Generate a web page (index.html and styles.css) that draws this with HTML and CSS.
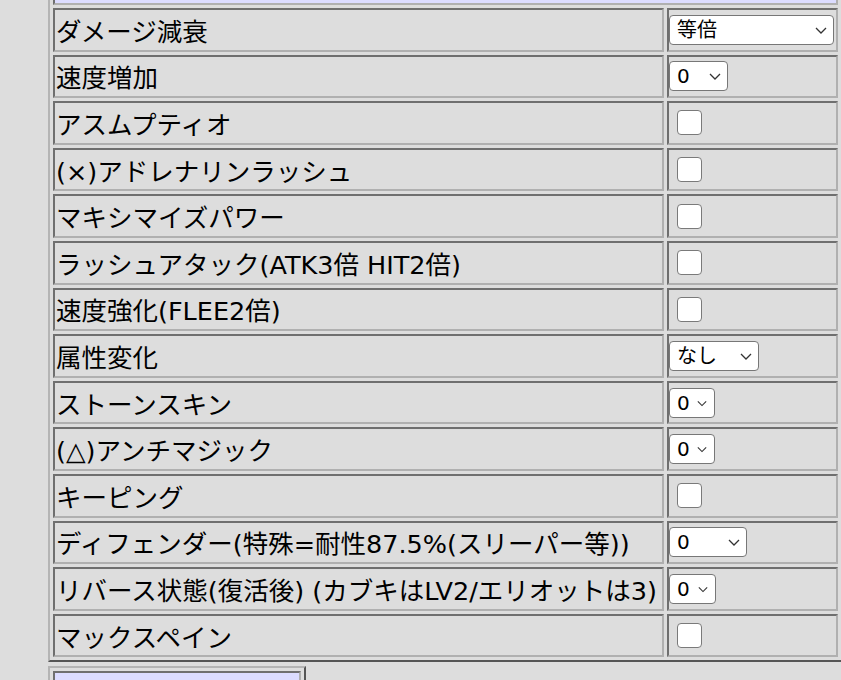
FILE: index.html
```html
<!DOCTYPE html>
<html lang="ja">
<head>
<meta charset="utf-8">
<title>設定</title>
<link rel="stylesheet" href="styles.css">
</head>
<body>
<div class="page">
  <table class="grid">
    <colgroup><col class="c-label"><col class="c-value"></colgroup>
    <tr><td class="head" colspan="2"></td></tr>
    <tr><td class="label">ダメージ減衰</td><td class="value"><span class="sel w165"><select><option>等倍</option></select><svg class="chev" viewBox="0 0 12 7"><path d="M1 1l5 5 5-5"/></svg></span></td></tr>
    <tr><td class="label">速度増加</td><td class="value"><span class="sel w59"><select><option>0</option></select><svg class="chev" viewBox="0 0 12 7"><path d="M1 1l5 5 5-5"/></svg></span></td></tr>
    <tr><td class="label">アスムプティオ</td><td class="value"><input type="checkbox" class="chk"></td></tr>
    <tr><td class="label">(×)アドレナリンラッシュ</td><td class="value"><input type="checkbox" class="chk"></td></tr>
    <tr><td class="label">マキシマイズパワー</td><td class="value"><input type="checkbox" class="chk"></td></tr>
    <tr><td class="label">ラッシュアタック(ATK3倍 HIT2倍)</td><td class="value"><input type="checkbox" class="chk"></td></tr>
    <tr><td class="label">速度強化(FLEE2倍)</td><td class="value"><input type="checkbox" class="chk"></td></tr>
    <tr><td class="label">属性変化</td><td class="value"><span class="sel w90"><select><option>なし</option></select><svg class="chev" viewBox="0 0 12 7"><path d="M1 1l5 5 5-5"/></svg></span></td></tr>
    <tr><td class="label">ストーンスキン</td><td class="value"><span class="sel w46"><select><option>0</option></select><svg class="chev" viewBox="0 0 12 7"><path d="M1 1l5 5 5-5"/></svg></span></td></tr>
    <tr><td class="label">(△)アンチマジック</td><td class="value"><span class="sel w46"><select><option>0</option></select><svg class="chev" viewBox="0 0 12 7"><path d="M1 1l5 5 5-5"/></svg></span></td></tr>
    <tr><td class="label">キーピング</td><td class="value"><input type="checkbox" class="chk"></td></tr>
    <tr><td class="label">ディフェンダー(特殊=耐性87.5%(スリーパー等))</td><td class="value"><span class="sel w78"><select><option>0</option></select><svg class="chev" viewBox="0 0 12 7"><path d="M1 1l5 5 5-5"/></svg></span></td></tr>
    <tr><td class="label">リバース状態(復活後) (カブキはLV2/エリオットは3)</td><td class="value"><span class="sel w47"><select><option>0</option></select><svg class="chev" viewBox="0 0 12 7"><path d="M1 1l5 5 5-5"/></svg></span></td></tr>
    <tr><td class="label">マックスペイン</td><td class="value"><input type="checkbox" class="chk"></td></tr>
  </table>
  <table class="next">
    <tr><td class="head"></td></tr>
  </table>
</div>
</body>
</html>
```
FILE: styles.css
```css
html, body {
  margin: 0;
  padding: 0;
  background: #dddddd;
}
body {
  font-family: "DejaVu Sans", "Noto Sans CJK JP", sans-serif;
  color: #000;
}
.page {
  padding-left: 48px;
  overflow: hidden;
  height: 680px;
}
table {
  border-collapse: separate;
  border-spacing: 3px;
  border: 2px solid;
  border-color: #b4b4b4 #555555 #555555 #b4b4b4;
  background: #dddddd;
}
td {
  box-sizing: border-box;
  border: 2px solid;
  border-color: #6f6f6f #b0b0b0 #b0b0b0 #6f6f6f;
  padding: 0 1px;
}
.grid {
  table-layout: fixed;
  width: 795px;
  margin-top: -40px;
}
.c-label { width: 611px; }
.c-value { width: 171px; }
.grid td.head {
  height: 40px;
  background: #dcdcff;
}
.label, .value {
  height: 43.6px;
  white-space: nowrap;
  vertical-align: middle;
}
.label {
  font-size: 25.5px;
  line-height: 34px;
  padding-top: 4px;
  padding-bottom: 0;
}
.value {
  padding: 0;
}
.sel {
  position: relative;
  display: inline-block;
  vertical-align: middle;
  height: 30px;
}
.sel select {
  appearance: none;
  -webkit-appearance: none;
  box-sizing: border-box;
  width: 100%;
  height: 30px;
  margin: 0;
  padding: 0 0 0 7px;
  border: 1.5px solid #777777;
  border-radius: 4px;
  background: #ffffff;
  color: #000;
  font-family: "DejaVu Sans", "Noto Sans CJK JP", sans-serif;
  font-size: 20px;
  line-height: 26px;
  display: block;
}
.chev {
  position: absolute;
  right: 7px;
  top: 12px;
  width: 12px;
  height: 7px;
  fill: none;
  stroke: #333;
  stroke-width: 1.3;
  pointer-events: none;
}
.w165 { width: 165px; }
.w59 { width: 59px; }
.w90 { width: 90px; }
.w46 { width: 46px; }
.w47 { width: 47px; }
.w78 { width: 78px; }
.w46 .chev, .w47 .chev { right: 8px; width: 10px; }
.chk {
  appearance: none;
  -webkit-appearance: none;
  box-sizing: border-box;
  width: 25px;
  height: 25px;
  margin: 0 0 0 8px;
  border: 1.5px solid #7a7a7a;
  border-radius: 4px;
  background: #ffffff;
  vertical-align: middle;
  display: inline-block;
}
.next {
  margin-top: 4px;
  width: 258px;
}
.next td.head {
  height: 40px;
  background: #dcdcff;
}
```
